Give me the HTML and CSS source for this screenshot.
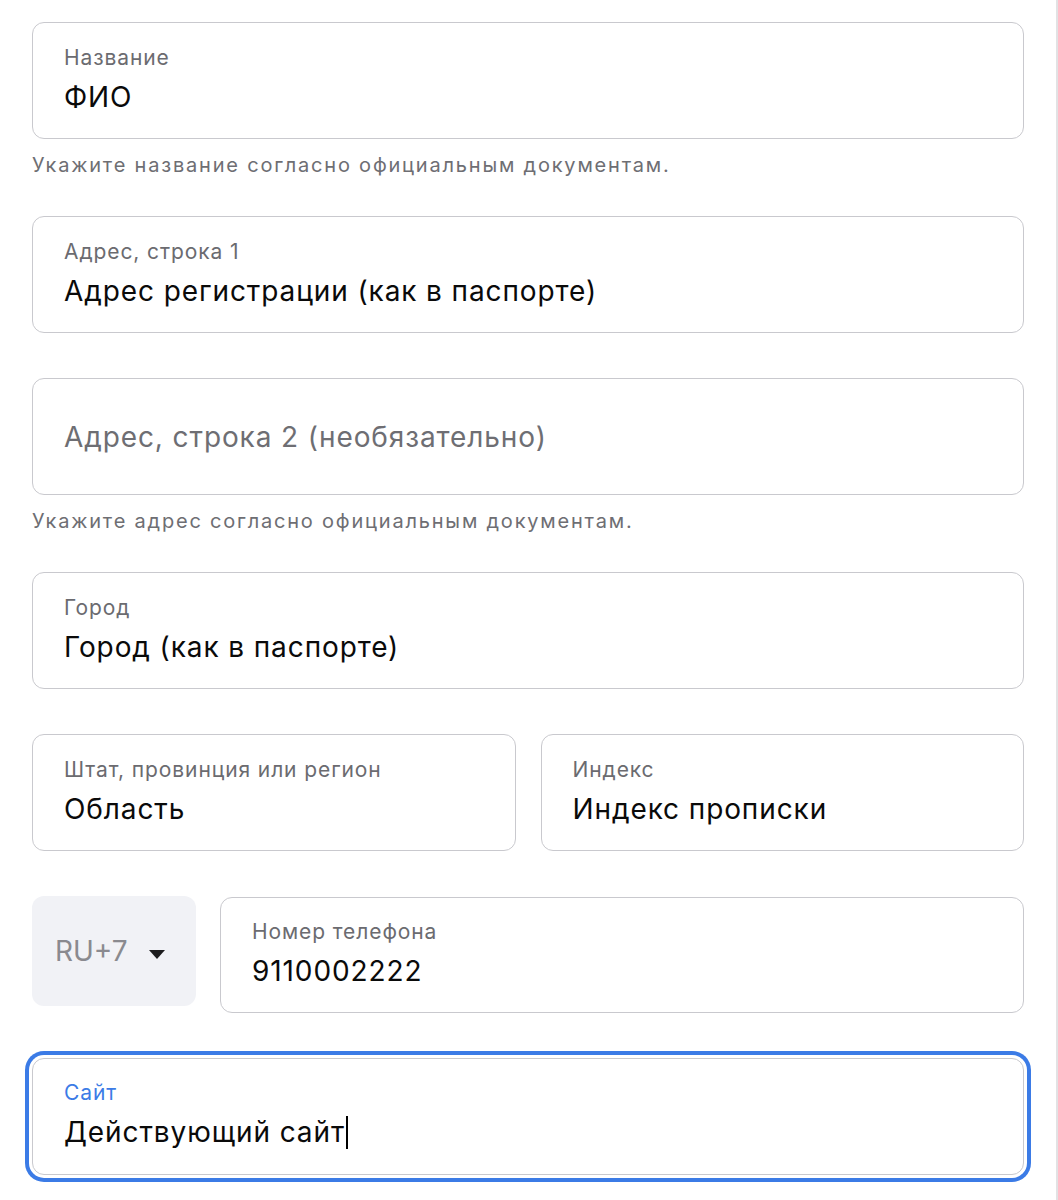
FILE: index.html
```html
<!DOCTYPE html>
<html lang="ru">
<head>
    <meta charset="UTF-8">
    <meta name="viewport" content="width=device-width, initial-scale=1.0">
    <title>Адрес</title>
    <link rel="stylesheet" href="styles.css">
</head>
<body>
    <div class="form">
        <!-- Название -->
        <div class="group">
            <div class="field">
                <div class="field-label">Название</div>
                <div class="field-value">ФИО</div>
            </div>
            <div class="hint">Укажите название согласно официальным документам.</div>
        </div>

        <!-- Адрес -->
        <div class="group">
            <div class="field">
                <div class="field-label">Адрес, строка 1</div>
                <div class="field-value">Адрес регистрации (как в паспорте)</div>
            </div>
        </div>
        <div class="group">
            <div class="field">
                <div class="field-placeholder">Адрес, строка 2 (необязательно)</div>
            </div>
            <div class="hint">Укажите адрес согласно официальным документам.</div>
        </div>

        <div class="group">
            <div class="field">
                <div class="field-label">Город</div>
                <div class="field-value">Город (как в паспорте)</div>
            </div>
        </div>

        <div class="group row">
            <div class="field">
                <div class="field-label">Штат, провинция или регион</div>
                <div class="field-value">Область</div>
            </div>
            <div class="field">
                <div class="field-label">Индекс</div>
                <div class="field-value">Индекс прописки</div>
            </div>
        </div>

        <!-- Телефон -->
        <div class="group phone-row">
            <div class="country">
                <span>RU+7</span>
                <span class="arrow"></span>
            </div>
            <div class="field">
                <div class="field-label">Номер телефона</div>
                <div class="field-value">9110002222</div>
            </div>
        </div>

        <div class="group">
            <div class="field focused">
                <div class="field-label">Сайт</div>
                <div class="field-value">Действующий сайт<span class="caret"></span></div>
            </div>
        </div>
    </div>
</body>
</html>
```

FILE: styles.css
```css
body {
    margin: 0;
    font-family: 'Inter', 'Liberation Sans', sans-serif;
    background-color: #fff;
    color: #111;
}

.form {
    width: 1058px;
    min-height: 1200px;
    box-sizing: border-box;
    padding: 22px 32px;
    border-right: 2px solid #e2e2e4;
}

.group {
    margin-bottom: 45px;
}

.field {
    height: 117px;
    box-sizing: border-box;
    border: 1px solid #c9c9ce;
    border-radius: 12px;
    padding: 0 31px 2px;
    display: flex;
    flex-direction: column;
    justify-content: center;
    background-color: #fff;
}

.field-label {
    font-size: 21px;
    line-height: 22px;
    letter-spacing: 0.9px;
    color: #6b6b70;
    margin-bottom: 12px;
}

.field-value {
    font-size: 28px;
    line-height: 32px;
    letter-spacing: 0.9px;
    color: #0a0a0a;
}

.field-placeholder {
    font-size: 28px;
    line-height: 32px;
    letter-spacing: 0.9px;
    color: #6e6e73;
    margin-top: 2px;
}

.hint {
    font-size: 20px;
    line-height: 24px;
    color: #6e6e73;
    letter-spacing: 1.8px;
    margin-top: 14px;
    margin-bottom: -6px;
}

.row {
    display: grid;
    grid-template-columns: 1fr 1fr;
    gap: 25px;
}

.phone-row {
    display: flex;
    gap: 24px;
    align-items: flex-start;
}

.phone-row .field {
    flex: 1;
    height: 116px;
    margin-top: 1px;
}

.country {
    width: 164px;
    height: 110px;
    box-sizing: border-box;
    border-radius: 12px;
    background-color: #f1f2f6;
    display: flex;
    align-items: center;
    padding: 0 23px;
    font-size: 28px;
    color: #8a8a8f;
}

.country .arrow {
    margin-left: auto;
    margin-top: 6px;
    margin-right: 8px;
    width: 0;
    height: 0;
    border-left: 8px solid transparent;
    border-right: 8px solid transparent;
    border-top: 9px solid #1c1c1e;
}

.field.focused {
    box-shadow: 0 0 0 3px #fff, 0 0 0 7px #3b7be6;
}

.field.focused .field-label {
    color: #3b7be6;
}

.caret {
    display: inline-block;
    width: 2px;
    height: 33px;
    background-color: #000;
    vertical-align: -7px;
    margin-left: 1px;
}
```
